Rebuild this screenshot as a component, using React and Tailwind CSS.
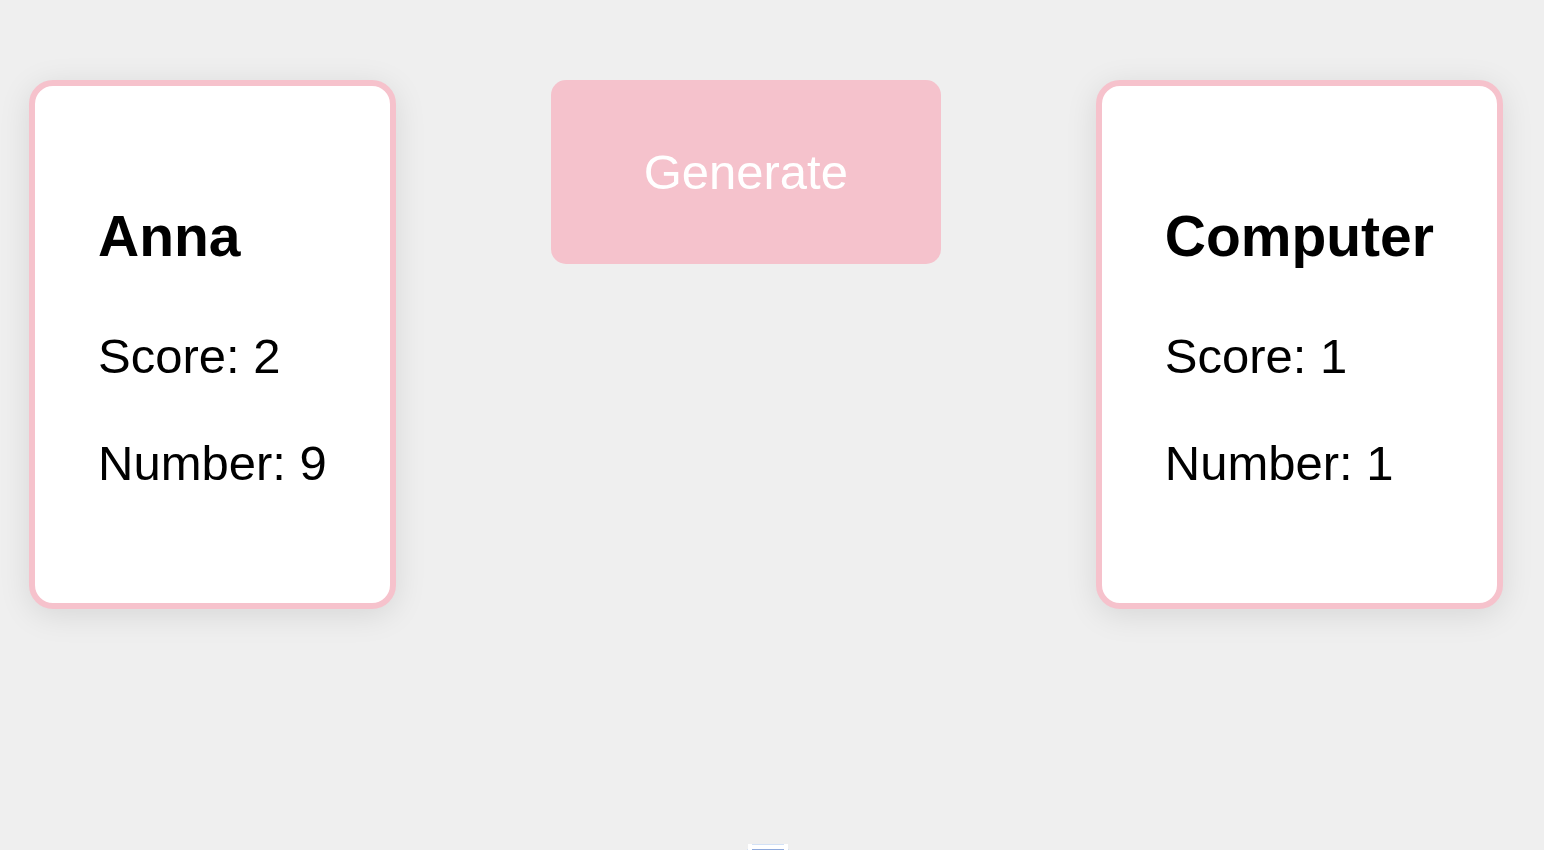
const players = [
  { name: "Anna", score: 2, number: 9 },
  { name: "Computer", score: 1, number: 1 },
];

function PlayerCard({ name, score, number }) {
  return (
    <section className="shrink-0 rounded-3xl border-6 border-[#f6c2cc] bg-white px-[63px] pt-[118px] pb-[111px] text-black shadow-[0_6px_32px_rgba(0,0,0,0.1)]">
      <h3 className="text-[57px] leading-[65px] font-bold">{name}</h3>
      <p className="mt-[59px] text-[49px] leading-[57px]">Score: {score}</p>
      <p className="mt-[50px] text-[49px] leading-[57px]">Number: {number}</p>
    </section>
  );
}

export default function App() {
  const [anna, computer] = players;
  return (
    <div className="flex min-h-screen flex-col bg-[#efefef] font-['Liberation_Sans',Arial,sans-serif]">
      <main className="flex flex-1 items-start justify-between pt-20 pr-[41px] pl-[29px]">
        <PlayerCard {...anna} />
        <button
          type="button"
          className="shrink-0 rounded-[15px] bg-[#f5c2cc] px-[93px] py-16 text-[49px] leading-[56px] text-white"
        >
          Generate
        </button>
        <PlayerCard {...computer} />
      </main>
      <footer className="flex justify-center">
        <svg className="mr-2 h-[6px] w-[42px]" viewBox="0 0 42 6" aria-hidden="true">
          <path d="M1 0H41V5H42V6H0V5H1Z" fill="#fff" />
          <path d="M5 0H37V1H5Z" fill="#d3e1f6" />
          <path d="M0 5H1V6H0ZM41 5H42V6H41Z" fill="#d3e1f6" />
          <path d="M5 5H37V6H5Z" fill="#8faadc" />
        </svg>
      </footer>
    </div>
  );
}
